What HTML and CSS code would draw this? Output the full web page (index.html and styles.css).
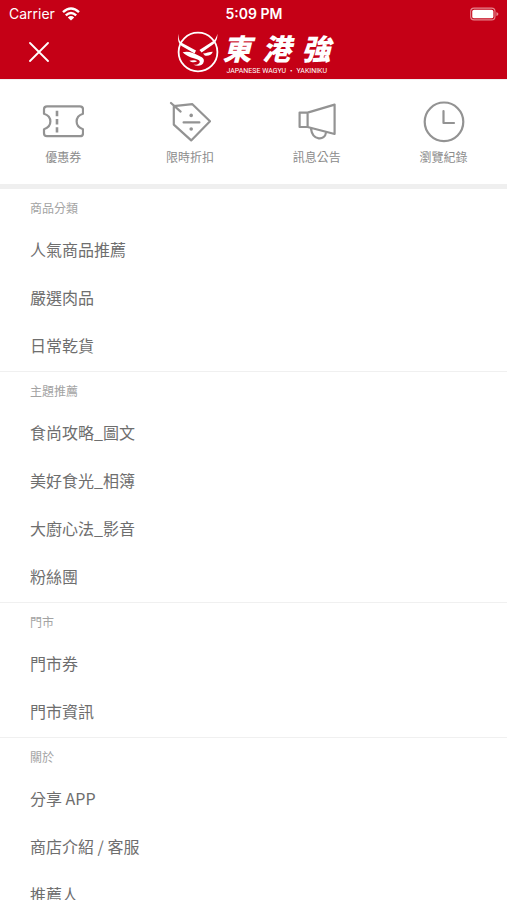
FILE: index.html
```html
<!DOCTYPE html>
<html lang="zh-Hant">
<head>
<meta charset="utf-8">
<meta name="viewport" content="width=device-width, initial-scale=1">
<title>東港強</title>
<link rel="stylesheet" href="styles.css">
</head>
<body>
<div class="app">
  <header class="header">
    <div class="status">
      <span class="carrier">Carrier
        <svg class="wifi" viewBox="0 0 18 14" aria-hidden="true"><g fill="none" stroke="#fff" stroke-width="2.4"><path d="M1 5.2Q9-2.4 17 5.2"/><path d="M3.8 8.4Q9 3.6 14.2 8.4"/></g><path d="M5.8 10.4Q9 7.6 12.2 10.4L9 13.6z" fill="#fff"/></svg>
      </span>
      <time class="clock">5:09 PM</time>
      <svg class="battery" viewBox="0 0 31 14" aria-hidden="true"><rect x=".7" y=".7" width="26" height="12.6" rx="3.6" fill="none" stroke="#e5858e" stroke-width="1.2"/><rect x="2.4" y="2.4" width="22.6" height="9.2" rx="2" fill="#fff"/><path d="M28.2 4.8Q30.4 5.6 30.4 7T28.2 9.2z" fill="#e5858e"/></svg>
    </div>
    <div class="titlebar">
      <button class="close" type="button" aria-label="關閉">
        <svg viewBox="0 0 20 20" aria-hidden="true"><path d="M1 1 19 19M19 1 1 19" fill="none" stroke="#fff" stroke-width="1.8" stroke-linecap="round"/></svg>
      </button>
      <a class="brand" href="#">
        <svg class="emblem" viewBox="0 0 42 44" aria-hidden="true">
          <circle cx="21" cy="21" r="19.4" fill="none" stroke="#fff" stroke-width="1.8"/>
          <path d="M1.6 2.8C1.4 8 2.4 11 6 12.4L19 19.6 17.6 22.4 4.6 15C1 12 .4 8 1.6 2.8ZM40.4 2.8C40.6 8 39.2 11 36 13.4L24.6 21.4 22.4 19 34 11.6C37.6 9.4 39.2 7.6 40.4 2.8Z" fill="#fff"/>
          <path d="M5.6 21.2C11 19.8 16 21.4 20.4 24 24.8 26 27.4 27.2 26.8 30.4 26 34.8 21 35.8 16.4 33.8 20.4 33.8 23 32.6 22.7 30.4 22.2 28 17 28 12.4 25.8 9.4 24.2 8 23.6 5.6 21.2Z" fill="#fff"/>
          <path d="M12.4 29.8C15.4 28.8 18.8 29 20 30.2 18 31.8 15 31.8 12.4 29.8ZM26 22.6C29 22.2 32.4 21 35.8 20.8 34.8 23.8 31.4 25.4 27.8 24.6Z" fill="#fff"/>
        </svg>
        <span class="wordmark">
          <span class="name"><span>東</span><span>港</span><span>強</span></span>
          <span class="tagline">JAPANESE WAGYU ・ YAKINIKU</span>
        </span>
      </a>
    </div>
  </header>

  <nav class="shortcuts" aria-label="快速功能">
    <a class="shortcut" href="#">
      <svg viewBox="0 0 42 42" aria-hidden="true"><path d="M5 5.3H38Q41 5.3 41 8.3V12.8C32.5 15.5 32.5 25.5 41 28.2V32.2Q41 35.2 38 35.2H5Q2 35.2 2 32.2V28.2C10.5 25.5 10.5 15.5 2 12.8V8.3Q2 5.3 5 5.3Z"/><path class="dash" d="M15 9.8V15.2M15 18V23.4M15 26.2V31.6"/></svg>
      <span>優惠券</span>
    </a>
    <a class="shortcut" href="#">
      <svg viewBox="0 0 42 42" aria-hidden="true"><path d="M2 2 11.6 10.6M4.8 5.2 23.4 3.2 41 20.2 22.2 39.4 4.8 23.6ZM14.6 21.4H30.4"/><circle class="dot" cx="22.2" cy="14.4" r="1.8"/><circle class="dot" cx="22.2" cy="28" r="1.8"/></svg>
      <span>限時折扣</span>
    </a>
    <a class="shortcut" href="#">
      <svg viewBox="0 0 42 42" aria-hidden="true"><path d="M3.6 11.6H11.6V26H3.6ZM11.6 11.6 38.6 3.6V33L11.6 26M15 27.8C16.6 39.7 29.1 40 30 31.5"/></svg>
      <span>訊息公告</span>
    </a>
    <a class="shortcut" href="#">
      <svg viewBox="0 0 42 42" aria-hidden="true"><circle cx="21" cy="20.8" r="19.3"/><path d="M20.5 10V22H31"/></svg>
      <span>瀏覽紀錄</span>
    </a>
  </nav>

  <nav class="menu" aria-label="選單">
    <section class="group">
      <h2>商品分類</h2>
      <ul>
        <li><a href="#">人氣商品推薦</a></li>
        <li><a href="#">嚴選肉品</a></li>
        <li><a href="#">日常乾貨</a></li>
      </ul>
    </section>
    <section class="group">
      <h2>主題推薦</h2>
      <ul>
        <li><a href="#">食尚攻略_圖文</a></li>
        <li><a href="#">美好食光_相簿</a></li>
        <li><a href="#">大廚心法_影音</a></li>
        <li><a href="#">粉絲團</a></li>
      </ul>
    </section>
    <section class="group">
      <h2>門市</h2>
      <ul>
        <li><a href="#">門市券</a></li>
        <li><a href="#">門市資訊</a></li>
      </ul>
    </section>
    <section class="group">
      <h2>關於</h2>
      <ul>
        <li><a href="#">分享 APP</a></li>
        <li><a href="#">商店介紹 / 客服</a></li>
        <li><a href="#">推薦人</a></li>
      </ul>
    </section>
  </nav>
</div>
</body>
</html>
```

FILE: styles.css
```css
* {
  box-sizing: border-box;
}

body {
  margin: 0;
  background: #fff;
  color: #6e6e6e;
  font-family: "Noto Sans CJK TC", sans-serif;
}

a {
  color: inherit;
  text-decoration: none;
}

svg {
  display: block;
}

.app {
  display: flex;
  flex-direction: column;
  height: 100vh;
}

.header {
  flex: none;
  background: #c50016;
  color: #fff;
}

.status {
  display: grid;
  grid-template-columns: 1fr auto 1fr;
  align-items: center;
  height: 27px;
  padding: 0 8px 0 9px;
  font-family: Inter, sans-serif;
  font-size: 14px;
  line-height: 20px;
}

.carrier {
  display: flex;
  align-items: center;
  gap: 7px;
}

.wifi {
  width: 18px;
  height: 14px;
}

.clock {
  font-weight: 600;
}

.battery {
  width: 29px;
  height: 14px;
  justify-self: end;
}

.titlebar {
  display: grid;
  grid-template-columns: 1fr auto 1fr;
  align-items: center;
  height: 52px;
  padding: 0 24px;
}

.close {
  justify-self: start;
  padding: 4px 5px 6px;
  border: 0;
  background: none;
}

.close svg {
  width: 20px;
  height: 20px;
}

.brand {
  display: flex;
  align-items: center;
  gap: 4px;
}

.emblem {
  width: 42px;
  height: 44px;
}

.wordmark {
  display: flex;
  flex-direction: column;
  width: 108px;
}

.name {
  display: flex;
  justify-content: space-between;
  font-size: 29px;
  font-style: italic;
  font-weight: 900;
  line-height: 34px;
}

.tagline {
  margin-top: 2px;
  padding-left: 4px;
  font-family: Roboto, "Noto Sans CJK TC", sans-serif;
  font-size: 7px;
  line-height: 10px;
  white-space: nowrap;
}

.shortcuts {
  display: grid;
  flex: none;
  grid-template-columns: repeat(4, 1fr);
  padding: 21px 0 17px;
  border-top: 1px solid #f0f0f0;
  border-bottom: 5px solid #efefef;
}

.shortcut {
  display: flex;
  flex-direction: column;
  align-items: center;
  gap: 5px;
  padding-bottom: 1px;
  color: #8c8c8c;
  font-size: 12px;
  line-height: 18px;
}

.shortcut svg {
  width: 42px;
  height: 42px;
  fill: none;
  stroke: #939393;
  stroke-width: 2.2;
  stroke-linejoin: round;
  stroke-linecap: round;
}

.shortcut .dash {
  stroke-linecap: butt;
  stroke-width: 2.6;
}

.shortcut .dot {
  fill: #939393;
  stroke: none;
}

.menu {
  flex: 1;
  min-height: 0;
  overflow-y: auto;
  scrollbar-width: none;
}

.group {
  padding-bottom: 2px;
  border-bottom: 1px solid #f0f0f0;
}

.group h2 {
  margin: 0;
  padding: 9px 30px 7px;
  color: #a3a3a3;
  font-size: 12px;
  font-weight: 400;
  line-height: 20px;
}

.group ul {
  margin: 0;
  padding: 0;
  list-style: none;
}

.group a {
  display: block;
  padding: 0 30px;
  font-size: 16px;
  line-height: 48px;
}
```
